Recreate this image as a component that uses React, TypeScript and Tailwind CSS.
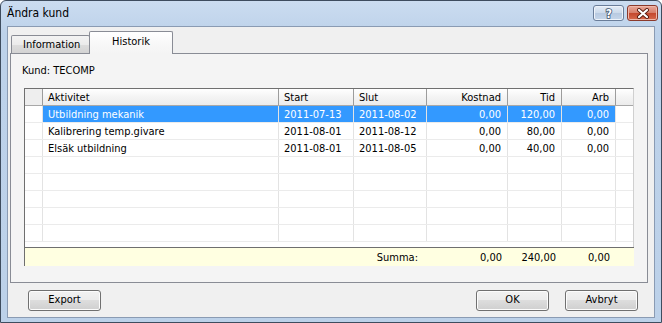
import React from "react";

const FONT =
  "font-['DejaVu_Sans_Condensed','DejaVu_Sans',sans-serif] font-stretch-condensed";

type Col = { w: string; label: string; right: boolean };
const cols: Col[] = [
  { w: "w-[236px]", label: "Aktivitet", right: false },
  { w: "w-[75px]", label: "Start", right: false },
  { w: "w-[73px]", label: "Slut", right: false },
  { w: "w-[81px]", label: "Kostnad", right: true },
  { w: "w-[54px]", label: "Tid", right: true },
  { w: "w-[54px]", label: "Arb", right: true },
];

const rows: string[][] = [
  ["Utbildning mekanik", "2011-07-13", "2011-08-02", "0,00", "120,00", "0,00"],
  ["Kalibrering temp.givare", "2011-08-01", "2011-08-12", "0,00", "80,00", "0,00"],
  ["Elsäk utbildning", "2011-08-01", "2011-08-05", "0,00", "40,00", "0,00"],
  ["", "", "", "", "", ""],
  ["", "", "", "", "", ""],
  ["", "", "", "", "", ""],
  ["", "", "", "", "", ""],
  ["", "", "", "", "", ""],
];

function WinButton({ label, className = "" }: { label: string; className?: string }) {
  return (
    <div
      className={`w-[73px] h-[21px] flex items-center justify-center rounded-[3px] border border-[#707070] bg-[linear-gradient(#f2f2f2,#ebebeb_50%,#dddddd_50%,#cfcfcf)] text-[11px] text-black shadow-[inset_0_0_0_1px_#fcfcfc] ${className}`}
    >
      {label}
    </div>
  );
}

function HelpButton() {
  return (
    <div className="w-[31px] h-[16px] rounded-[3px] border border-[#6a7d99] bg-[linear-gradient(#e4ecf6,#cbd9ea_50%,#b7c9e0_50%,#c6d6ea)] flex items-center justify-center shadow-[inset_0_0_0_1px_#eef3fa]">
      <svg width="12" height="13" viewBox="0 0 12 13">
        <text
          x="6"
          y="11"
          textAnchor="middle"
          fontFamily="DejaVu Sans, sans-serif"
          fontWeight="bold"
          fontSize="12"
          fill="#ffffff"
          stroke="#41536e"
          strokeWidth="1.6"
          paintOrder="stroke"
        >
          ?
        </text>
      </svg>
    </div>
  );
}

function CloseButton() {
  return (
    <div className="w-[31px] h-[16px] rounded-[3px] border border-[#8b3a2c] bg-[linear-gradient(#e9a99a,#d67c68_50%,#c4462c_50%,#d66a4d)] flex items-center justify-center shadow-[inset_0_0_0_1px_#f0b8aa]">
      <svg width="14" height="11" viewBox="0 0 14 11">
        <path d="M3 2 L11 9 M11 2 L3 9" stroke="#5a1d12" strokeWidth="4" strokeLinecap="round" />
        <path d="M3 2 L11 9 M11 2 L3 9" stroke="#ffffff" strokeWidth="2.2" strokeLinecap="round" />
      </svg>
    </div>
  );
}

export default function App() {
  return (
    <div
      className={`w-[662px] h-[323px] flex flex-col overflow-hidden rounded-t-[6px] border border-[#3e4c5e] bg-[linear-gradient(#cbdcf0,#bdd2ea_10%,#bcd1e9)] text-black ${FONT}`}
    >
      {/* Title bar */}
      <div className="h-[25px] flex items-start justify-between pl-[6px] pr-[3px]">
        <div className="mt-[5px] text-[12px] leading-[15px] text-black">Ändra kund</div>
        <div className="mt-[4px] flex gap-[3px]">
          <HelpButton />
          <CloseButton />
        </div>
      </div>

      {/* Client area */}
      <div className="flex-1 flex px-[6px] pb-[4px]">
        <div className="flex-1 flex flex-col bg-[#f0f0f0] border border-[#8a9bb3]">
          {/* Tab strip */}
          <div className="mt-[4px] h-[22px] flex items-end pl-[3px] text-[11px]">
            <div className="w-[79px] h-[18px] border border-b-0 border-[#898c95] rounded-t-[2px] bg-[linear-gradient(#f3f3f3,#ebebeb_50%,#dddddd_50%,#d3d3d3)] pl-[11px] pt-[2px] leading-[13px]">
              Information
            </div>
            <div className="relative z-10 -ml-[1px] w-[84px] h-[23px] -mb-[1px] border border-b-0 border-[#898c95] rounded-t-[2px] bg-[linear-gradient(#ffffff,#f7f7f7_60%,#f4f4f4)] flex justify-center pt-[3px] leading-[13px]">
              Historik
            </div>
          </div>

          {/* Tab panel */}
          <div className="ml-[2px] w-[638px] h-[230px] border border-[#898c95] bg-[#f4f4f4] flex flex-col pl-[11px] text-[11px]">
            <div className="mt-[10px] leading-[13px]">Kund: TECOMP</div>

            <div className="mt-[11px] ml-[2px] w-[610px] flex flex-col">
              {/* grid */}
              <div className="h-[159px] border-t border-l border-r border-t-[#6f6f6f] border-l-[#6f6f6f] border-r-[#d0d0d0] bg-white flex flex-col">
                {/* header */}
                <div className="h-[17px] flex border-b border-[#a8a8a8] bg-[linear-gradient(#ffffff,#f4f4f4_50%,#ececec)]">
                  <div className="w-[18px] border-r border-[#9c9c9c] bg-[#eeeeee]" />
                  {cols.map((c) => (
                    <div
                      key={c.label}
                      className={`${c.w} border-r border-[#9c9c9c] px-[6px] flex items-center leading-[13px] ${c.right ? "justify-end" : "pl-[5px]"}`}
                    >
                      {c.label}
                    </div>
                  ))}
                  <div className="flex-1" />
                </div>
                {/* rows */}
                {rows.map((r, i) => {
                  const sel = i === 0;
                  return (
                    <div key={i} className="h-[17px] flex border-b border-[#ebebeb]">
                      <div className="w-[18px] border-r border-[#e3e3e3]" />
                      {cols.map((c, j) => (
                        <div
                          key={j}
                          className={`${c.w} border-r border-[#e3e3e3] px-[6px] flex items-center leading-[13px] whitespace-nowrap ${c.right ? "justify-end" : "pl-[5px]"} ${sel ? "bg-[#3399ff] text-white" : ""}`}
                        >
                          {r[j]}
                        </div>
                      ))}
                      <div className="flex-1" />
                    </div>
                  );
                })}
              </div>
              {/* summary */}
              <div className="h-[19px] border-t border-l border-[#6f6f6f] bg-[#ffffe1] flex items-center leading-[13px]">
                <div className="w-[18px]" />
                <div className="w-[236px]" />
                <div className="w-[75px]" />
                <div className="w-[73px] flex justify-end pr-[9px]">Summa:</div>
                <div className="w-[81px] flex justify-end pr-[6px]">0,00</div>
                <div className="w-[54px] flex justify-end pr-[6px]">240,00</div>
                <div className="w-[54px] flex justify-end pr-[6px]">0,00</div>
                <div className="flex-1" />
              </div>
            </div>
          </div>

          {/* Buttons */}
          <div className="mt-[7px] flex items-center pl-[20px] pr-[16px]">
            <WinButton label="Export" />
            <div className="flex-1" />
            <WinButton label="OK" />
            <WinButton label="Avbryt" className="ml-[16px]" />
          </div>
        </div>
      </div>
    </div>
  );
}
